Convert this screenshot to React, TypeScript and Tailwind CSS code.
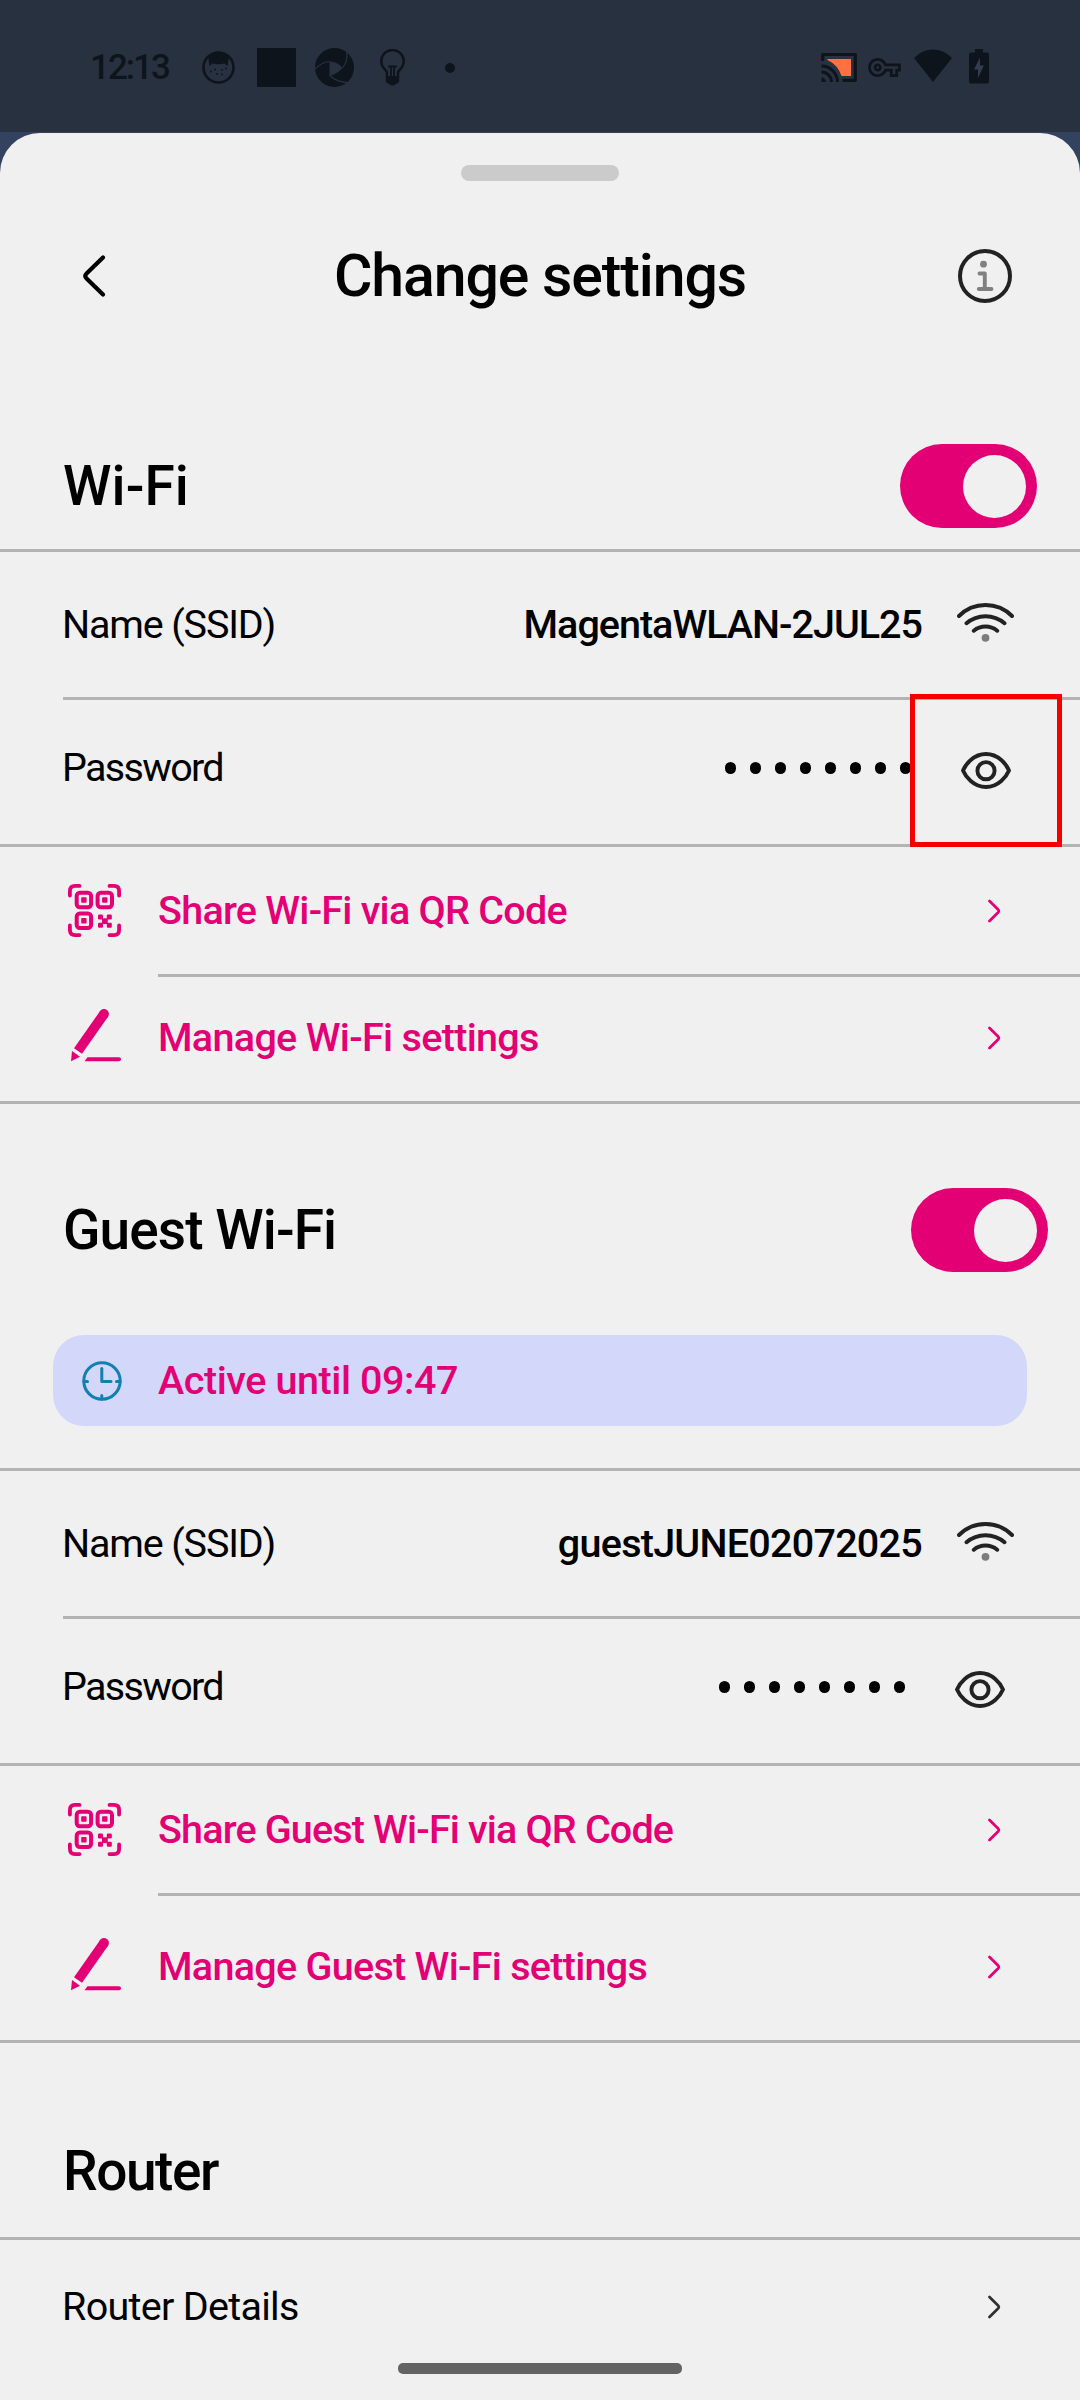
import type { ReactNode } from "react";

/* ---------- status bar icons ---------- */

function CatIcon() {
  return (
    <svg className="h-[33px] w-[33px]" viewBox="0 0 33 33" fill="none">
      <circle cx="16.5" cy="16.5" r="15" stroke="#0e141b" strokeWidth="2.6" />
      <path d="M6 5Q16.500 -1 27 5L25.500 15L22.500 12.500Q16.500 14 10.500 12.500L7.500 15Z" fill="#0e141b" />
      <g fill="#0e141b">
        <circle cx="9" cy="20.500" r="0.900" />
        <circle cx="13" cy="18.500" r="0.900" />
        <circle cx="20" cy="19" r="0.900" />
        <circle cx="24" cy="17.500" r="0.900" />
        <circle cx="15" cy="23" r="0.900" />
        <circle cx="20" cy="23.500" r="0.900" />
      </g>
    </svg>
  );
}

function ApertureIcon() {
  return (
    <svg className="h-[39px] w-[39px]" viewBox="0 0 39 39" fill="none">
      <circle cx="19.500" cy="19.500" r="19.500" fill="#0e141b" />
      <path d="M14.500 13.500Q22 13 27.500 20Q22 26.500 14.500 27.500Z" fill="#283140" />
      <path d="M0 21Q6 14.500 14.800 13.500M31.500 3Q33.500 12 27.500 20M14.500 27Q21 34.500 36 35" stroke="#283140" strokeWidth="1.200" />
    </svg>
  );
}

function BulbIcon() {
  return (
    <svg className="h-[37px] w-[25px]" viewBox="0 0 25 37" fill="none">
      <path d="M7 28V24.500Q7 22 4.500 20A11.200 11.200 0 1 1 20.500 20Q18 22 18 24.500V28" stroke="#0e141b" strokeWidth="2.400" />
      <path d="M8 17.500H17M11 18V28M14 18V28" stroke="#0e141b" strokeWidth="1.800" />
      <path d="M5.800 27H19.200V32Q18.500 34.500 16 35Q12.500 38 9 35Q6.500 34.500 5.800 32Z" fill="#0e141b" />
    </svg>
  );
}

function CastIcon() {
  return (
    <svg className="h-[31px] w-[36px]" viewBox="0 0 36 31" fill="none">
      <path d="M6.500 7H30V24H20.500Q17 13 6.500 8Z" fill="#ff7043" />
      <path d="M1.700 9V2.500H34.300V28.300H21.500" stroke="#0e141b" strokeWidth="3.200" strokeLinejoin="round" />
      <path d="M0.500 14A16 16 0 0 1 16.500 30M0.500 20A10 10 0 0 1 10.500 30" stroke="#0e141b" strokeWidth="2.900" />
      <path d="M0.500 25.500A4.500 4.500 0 0 1 5 30H0.500Z" fill="#0e141b" />
    </svg>
  );
}

function KeyIcon() {
  return (
    <svg className="h-[19px] w-[33px]" viewBox="0 5 24 14" fill="#0e141b">
      <path d="M22 19h-6v-4h-2.680c-1.140 2.420-3.600 4-6.320 4-3.860 0-7-3.140-7-7s3.140-7 7-7c2.720 0 5.170 1.580 6.320 4H24v6h-2v4zm-4-2h2v-4h2v-2H11.940l-.23-.67C11.010 8.340 9.110 7 7 7c-2.760 0-5 2.240-5 5s2.240 5 5 5c2.110 0 4.010-1.340 4.710-3.330l.23-.67H18v4zM7 15c-1.650 0-3-1.350-3-3s1.350-3 3-3 3 1.350 3 3-1.350 3-3 3zm0-4c-.55 0-1 .45-1 1s.45 1 1 1 1-.45 1-1-.45-1-1-1z" />
    </svg>
  );
}

function SignalIcon() {
  return (
    <svg className="h-[33px] w-[38px]" viewBox="0 0 38 33" fill="#0e141b">
      <path d="M0 9A25.500 25.500 0 0 1 38 9L19 33Z" />
    </svg>
  );
}

function BatteryIcon() {
  return (
    <svg className="h-[35px] w-[20px]" viewBox="0 0 20 35">
      <path d="M6 0H14V3.500H18Q20 3.500 20 5.500V32.500Q20 34.500 18 34.500H2Q0 34.500 0 32.500V5.500Q0 3.500 2 3.500H6Z" fill="#0e141b" />
      <path d="M11 8.500L5 20.500H9V29L14.800 16.500H11Z" fill="#343c50" />
    </svg>
  );
}

/* ---------- content icons ---------- */

function InfoIcon() {
  return (
    <svg className="h-[54px] w-[54px]" viewBox="0 0 54 54" fill="none">
      <circle cx="27" cy="27" r="25" stroke="#222222" strokeWidth="4" />
      <circle cx="25.500" cy="15.200" r="3.400" fill="#808080" />
      <path d="M21.500 24.500H26.800V39.800M20.800 40H33.500" stroke="#808080" strokeWidth="3.900" strokeLinecap="round" strokeLinejoin="round" />
    </svg>
  );
}

function WifiIcon() {
  return (
    <svg className="h-[39px] w-[57px]" viewBox="0 0 57 39" fill="none">
      <path
        d="M2 13A37.400 37.400 0 0 1 55 13M9.500 20.300A29 29 0 0 1 47.500 20.300M16.800 27.700A18.600 18.600 0 0 1 40.200 27.700"
        stroke="#222222"
        strokeWidth="3.900"
        strokeLinecap="round"
      />
      <circle cx="28.500" cy="34.800" r="3.900" fill="#7c7c7c" />
    </svg>
  );
}

function EyeIcon() {
  return (
    <svg className="h-[37px] w-[50px]" viewBox="0 0 50 37" fill="none" stroke="#222222" strokeWidth="3.900" strokeLinejoin="round">
      <path d="M2 18.500C4.500 12.500 12.500 2 25 2S45.500 12.500 48 18.500C45.500 24.500 37.500 35 25 35S4.500 24.500 2 18.500Z" />
      <circle cx="25" cy="18.700" r="8.600" />
    </svg>
  );
}

function QrIcon() {
  return (
    <svg className="h-[53px] w-[53px]" viewBox="0 0 53 53" fill="none" stroke="#e20074">
      <path
        d="M1.900 11.500V7Q1.900 1.900 7 1.900H11.500M41.500 1.900H46Q51.100 1.900 51.100 7V11.500M51.100 41.500V46Q51.100 51.100 46 51.100H41.500M11.500 51.100H7Q1.900 51.100 1.900 46V41.500"
        strokeWidth="3.800"
        strokeLinecap="round"
      />
      <g strokeWidth="4">
        <rect x="8.700" y="8.800" width="14.400" height="14.400" rx="3.200" />
        <rect x="29.600" y="8.800" width="14.400" height="14.400" rx="3.200" />
        <rect x="8.700" y="29.600" width="14.400" height="14.400" rx="3.200" />
      </g>
      <g fill="#e20074" stroke="none">
        <rect x="13.200" y="13.300" width="5.400" height="5.400" rx="0.800" />
        <rect x="34.100" y="13.300" width="5.400" height="5.400" rx="0.800" />
        <rect x="13.200" y="34.100" width="5.400" height="5.400" rx="0.800" />
        <rect x="30" y="30.500" width="5" height="5" rx="1.200" />
        <rect x="38.800" y="30.500" width="5" height="5" rx="1.200" />
        <rect x="34" y="34.300" width="5.800" height="5.800" />
        <rect x="30" y="38.800" width="5" height="5" rx="1.200" />
        <rect x="38.800" y="38.800" width="5" height="5" rx="1.200" />
      </g>
    </svg>
  );
}

function PenIcon() {
  return (
    <svg className="mb-[6px] h-[53px] w-[53px]" viewBox="0 0 53 53" fill="#e20074">
      <path d="M10 42L36 5" stroke="#e20074" strokeWidth="9.800" />
      <circle cx="36" cy="5" r="4.900" />
      <path d="M4 42L12 47.700L3 52.300Z" />
      <path d="M19.500 48.200H51Q53 48.200 53 50.200T51 52.200H16.500Z" />
    </svg>
  );
}

function ClockIcon() {
  return (
    <svg className="h-[40px] w-[40px]" viewBox="0 0 40 40" fill="none" stroke="#1280b0" strokeWidth="3">
      <circle cx="20" cy="20" r="18.200" />
      <path d="M19.800 7.500V20.500H29" strokeLinecap="round" strokeLinejoin="round" />
      <path d="M2 20.500H5.500M34.500 20.500H38M19.800 34.500V38" strokeLinecap="round" />
    </svg>
  );
}

function Chevron({ color = "#e20074" }: { color?: string }) {
  return (
    <svg className="h-[24px] w-[14px]" viewBox="0 0 14 24" fill="none" stroke={color} strokeWidth="2.700" strokeLinecap="round" strokeLinejoin="round">
      <path d="M2.500 2L11.300 10.800Q12.300 12 11.300 13.200L2.500 22" />
    </svg>
  );
}

/* ---------- building blocks ---------- */

function Toggle() {
  return (
    <div className="flex h-[84px] w-[137px] items-center justify-end rounded-full bg-[#e20074] pr-[11px]">
      <div className="h-[63px] w-[63px] rounded-full bg-[#f0f0f0]" />
    </div>
  );
}

function Divider({ inset = "" }: { inset?: string }) {
  return <div className={`h-[3px] shrink-0 bg-[#b3b3b3] ${inset}`} />;
}

const heading = "pb-px text-[55px] leading-[64px] font-medium";

function NameRow({ children }: { children: ReactNode }) {
  return (
    <div className="flex h-[145px] items-center pr-[66px] pl-[62px]">
      <span className="tracking-[-1.16px]">Name (SSID)</span>
      <span className="ml-auto flex font-medium">{children}</span>
      <div className="-mt-[4px] ml-[35px]">
        <WifiIcon />
      </div>
    </div>
  );
}

function PasswordRow({ end, children }: { end: string; children?: ReactNode }) {
  return (
    <div className={`relative flex h-[144px] items-center pl-[62px] ${end}`}>
      <span className="mb-[9px] tracking-[-1.7px]">Password</span>
      <div className="mb-[8px] ml-auto flex gap-[14px]">
        {Array.from({ length: 8 }, (_, i) => (
          <i key={i} className="h-[12px] w-[11px] rounded-full bg-black" />
        ))}
      </div>
      <div className="mb-[3px] ml-[50px]">
        <EyeIcon />
      </div>
      {children}
    </div>
  );
}

function LinkRow({ size, icon, children }: { size: string; icon: ReactNode; children: ReactNode }) {
  return (
    <div className={`flex items-center pr-[79px] pl-[68px] font-medium text-[#e20074] ${size}`}>
      {icon}
      <span className="ml-[37px] flex-1">{children}</span>
      <Chevron />
    </div>
  );
}

export default function App() {
  return (
    <div className="relative flex h-[2400px] w-[1080px] flex-col overflow-hidden bg-[#33425f] font-['Roboto',sans-serif] text-[39.5px] leading-[48px] whitespace-nowrap text-black">
      <header className="flex h-[132px] shrink-0 items-center bg-[#283140] pt-[3px] pr-[91px] pl-[90px]">
        <span className="w-[112px] text-[35px] font-medium tracking-[-2px] text-[#0e141b]">12:13</span>
        <CatIcon />
        <div className="ml-[22px] h-[39px] w-[39px] bg-[#0e141b]" />
        <div className="ml-[19px]">
          <ApertureIcon />
        </div>
        <div className="ml-[26px]">
          <BulbIcon />
        </div>
        <div className="ml-[40px] h-[10px] w-[10px] rounded-full bg-[#0e141b]" />
        <div className="ml-auto flex items-center">
          <CastIcon />
          <div className="ml-[11px]">
            <KeyIcon />
          </div>
          <div className="-mt-[4px] ml-[13px]">
            <SignalIcon />
          </div>
          <div className="-mt-[2px] ml-[17px]">
            <BatteryIcon />
          </div>
        </div>
      </header>

      <main className="mt-px flex flex-1 flex-col rounded-t-[40px] bg-[#f0f0f0] pt-[32px]">
        <div className="mx-auto h-[16px] w-[158px] shrink-0 rounded-full bg-[#cbcbcb]" />

        <div className="grid h-[190px] shrink-0 grid-cols-[1fr_auto_1fr] items-center">
          <svg className="ml-[82px] h-[42px] w-[24px]" viewBox="0 0 24 42" fill="none" stroke="#000" strokeWidth="4.200" strokeLinecap="round" strokeLinejoin="round">
            <path d="M21 2.500L4.300 18.800Q2.300 21 4.300 23.200L21 39.500" />
          </svg>
          <h1 className="text-[59px] leading-[70px] font-medium tracking-[-1.1px]">Change settings</h1>
          <div className="mr-[68px] justify-self-end">
            <InfoIcon />
          </div>
        </div>

        <div className="flex h-[178px] shrink-0 items-center justify-between pt-[52px] pr-[43px] pl-[63px]">
          <h2 className={`${heading} tracking-[0.1px]`}>Wi-Fi</h2>
          <Toggle />
        </div>
        <Divider />
        <NameRow>
          <span className="tracking-[-1px]">MagentaWLAN-2JUL25</span>
        </NameRow>
        <Divider inset="ml-[63px]" />
        <PasswordRow end="pr-[69px]">
          <div className="absolute -top-[6px] left-[910px] z-10 h-[153px] w-[152px] border-[5px] border-[#f50000]" />
        </PasswordRow>
        <Divider />
        <LinkRow size="h-[127px]" icon={<QrIcon />}>
          <span className="tracking-[-0.74px]">Share Wi-Fi via QR Code</span>
        </LinkRow>
        <Divider inset="ml-[158px]" />
        <LinkRow size="h-[124px] pb-[2px]" icon={<PenIcon />}>
          <span className="tracking-[-0.68px]">Manage Wi-Fi settings</span>
        </LinkRow>
        <Divider />

        <div className="flex h-[231px] shrink-0 items-center justify-between pt-[21px] pr-[32px] pl-[63px]">
          <h2 className={`${heading} tracking-[-0.92px]`}>Guest Wi-Fi</h2>
          <Toggle />
        </div>
        <div className="mr-[53px] mb-[42px] ml-[53px] flex h-[91px] shrink-0 items-center rounded-[31px] bg-[#d3d7f9] pl-[29px] font-medium text-[#e20074]">
          <ClockIcon />
          <span className="ml-[36px] tracking-[-0.42px]">Active until 09:47</span>
        </div>
        <Divider />
        <NameRow>
          <span className="tracking-[-0.74px]">guestJUNE02072025</span>
        </NameRow>
        <Divider inset="ml-[63px]" />
        <PasswordRow end="pr-[75px]" />
        <Divider />
        <LinkRow size="h-[127px]" icon={<QrIcon />}>
          <span className="tracking-[-0.83px]">Share Guest Wi-Fi via QR Code</span>
        </LinkRow>
        <Divider inset="ml-[158px]" />
        <LinkRow size="h-[144px] pb-[2px]" icon={<PenIcon />}>
          <span className="tracking-[-0.71px]">Manage Guest Wi-Fi settings</span>
        </LinkRow>
        <Divider />

        <div className="flex h-[194px] shrink-0 items-center pt-[62px] pl-[63px]">
          <h2 className={`${heading} tracking-[-1.44px]`}>Router</h2>
        </div>
        <Divider />
        <div className="flex h-[133px] items-center justify-between pr-[79px] pl-[62px]">
          <span className="tracking-[-0.71px]">Router Details</span>
          <Chevron color="#303030" />
        </div>
      </main>

      <div className="absolute bottom-[26px] left-[398px] h-[11px] w-[284px] rounded-[5px] bg-[#636363]" />
    </div>
  );
}
